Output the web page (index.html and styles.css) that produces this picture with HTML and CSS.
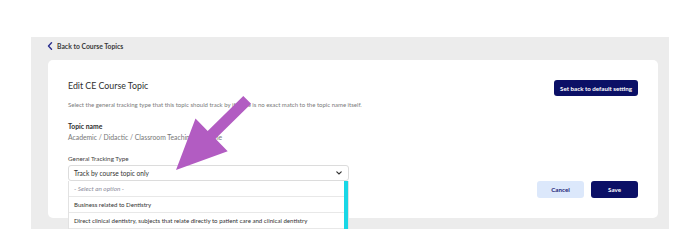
FILE: index.html
```html
<!DOCTYPE html>
<html lang="en">
<head>
  <meta charset="UTF-8">
  <title>Edit CE Course Topic</title>
  <link rel="stylesheet" href="styles.css">
</head>
<body>
<div class="page">
  <div class="back-row">
    <svg class="back-icon" width="6" height="8" viewBox="0 0 6 8"><path d="M4.5 0.8 L1.5 4 L4.5 7.2" fill="none" stroke="#2b2f8f" stroke-width="1.4" stroke-linecap="round" stroke-linejoin="round"/></svg>
    <span>Back to Course Topics</span>
  </div>

  <div class="card">
    <div class="card-header">
      <div>
        <h3>Edit CE Course Topic</h3>
        <p class="subtitle">Select the general tracking type that this topic should track by if there is no exact match to the topic name itself.</p>
      </div>
      <button class="btn btn-primary btn-reset">Set back to default setting</button>
    </div>

    <div class="field">
      <div class="field-label">Topic name</div>
      <div class="field-value">Academic / Didactic / Classroom Teaching Full Time</div>
    </div>

    <div class="card-bottom">
      <div class="select-group">
        <label for="trackingType">General Tracking Type</label>
        <div class="select-box" id="trackingType">
          <span>Track by course topic only</span>
          <svg width="6" height="4" viewBox="0 0 6 4"><path d="M0.8 0.8 L3 3 L5.2 0.8" fill="none" stroke="#333" stroke-width="1.2" stroke-linecap="round"/></svg>
        </div>
        <ul class="select-menu">
          <li class="placeholder">- Select an option -</li>
          <li>Business related to Dentistry</li>
          <li>Direct clinical dentistry, subjects that relate directly to patient care and clinical dentistry</li>
        </ul>
      </div>
      <div class="actions">
        <button class="btn btn-light">Cancel</button>
        <button class="btn btn-primary btn-save">Save</button>
      </div>
    </div>
  </div>
</div>

<svg class="annotation" width="688" height="246" viewBox="0 0 688 246">
  <polygon points="176,170 195.5,118.5 207.7,131 243.3,95.9 251.1,103.7 215.5,138.8 227.7,151.3" fill="#b25cc2"/>
</svg>
</body>
</html>
```

FILE: styles.css
```css
body {
  margin: 0;
  background: #ffffff;
  font-family: Lato, "Noto Sans", sans-serif;
  color: #333333;
}

.page {
  margin: 37px 0 0 31px;
  width: 638px;
  height: 192px;
  background: #ececec;
  overflow: hidden;
}

.back-row {
  display: flex;
  align-items: center;
  gap: 4px;
  height: 23px;
  box-sizing: border-box;
  padding: 0 0 5px 16px;
  font-size: 6.8px;
  font-weight: 700;
  color: #3a3a3a;
}

.back-icon {
  display: block;
}

.card {
  margin-left: 17px;
  width: 610px;
  height: 158px;
  box-sizing: border-box;
  padding: 20px;
  background: #ffffff;
  border-radius: 5px;
  display: flex;
  flex-direction: column;
}

.card-header {
  display: flex;
  justify-content: space-between;
  align-items: flex-start;
}

h3 {
  margin: 0;
  font-size: 8.8px;
  font-weight: 400;
  color: #2e2e2e;
  line-height: 11px;
}

.subtitle {
  margin: 10px 0 0;
  font-size: 6px;
  color: #7a7a7a;
  line-height: 7px;
}

.btn {
  border: none;
  border-radius: 3px;
  font-family: Lato, "Noto Sans", sans-serif;
  font-weight: 700;
  font-size: 6.2px;
  height: 17px;
  padding: 0 8px;
  cursor: pointer;
}

.btn-primary {
  background: #0b1066;
  color: #ffffff;
}

.btn-light {
  background: #dce8fb;
  color: #1c2377;
  width: 47px;
}

.btn-reset {
  width: 84px;
  height: 16px;
  padding: 0;
}

.btn-save {
  width: 47px;
}

.field {
  margin-top: 14px;
}

.field-label {
  font-size: 6.8px;
  font-weight: 700;
  color: #2e2e2e;
  line-height: 9px;
}

.field-value {
  margin-top: 2px;
  font-size: 6.8px;
  color: #777777;
  line-height: 9px;
}

.card-bottom {
  flex: 1;
  margin-top: 13px;
  display: flex;
  justify-content: space-between;
  align-items: flex-end;
}

.select-group {
  align-self: flex-start;
  position: relative;
  width: 281px;
}

label {
  display: block;
  font-size: 6.3px;
  color: #444444;
  line-height: 8px;
  margin-bottom: 2px;
}

.select-box {
  display: flex;
  align-items: center;
  justify-content: space-between;
  height: 16px;
  padding: 0 6px 0 5px;
  border: 1px solid #dcdcdc;
  border-radius: 3px;
  box-sizing: border-box;
  font-size: 6.6px;
  color: #333333;
}

.select-menu {
  position: absolute;
  left: 0;
  top: 26px;
  width: 281px;
  box-sizing: border-box;
  margin: 0;
  padding: 0 4px 0 0;
  list-style: none;
  background: #ffffff;
  border: 1px solid #e2e2e2;
  border-top: none;
  box-shadow: inset -4px 0 0 #19d7e6;
}

.select-menu li {
  height: 16px;
  line-height: 16px;
  padding-left: 5px;
  font-size: 6.1px;
  color: #333333;
  border-bottom: 1px solid #e8e8e8;
  box-sizing: border-box;
  white-space: nowrap;
  overflow: hidden;
}

.select-menu li.placeholder {
  font-style: italic;
  font-size: 6.4px;
  color: #8a8a9a;
}

.actions {
  display: flex;
  gap: 7px;
}

.annotation {
  position: absolute;
  left: 0;
  top: 0;
  pointer-events: none;
}
```
